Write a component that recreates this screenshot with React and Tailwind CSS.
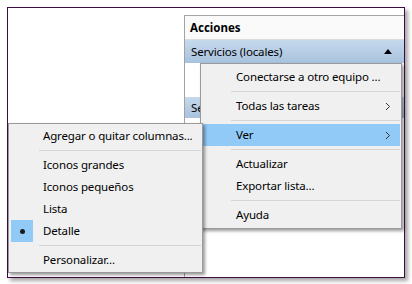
import React from 'react';

// --- menu building blocks ---

const font = { fontFamily: '"Noto Sans", "Segoe UI", Arial, sans-serif' };

const Chevron = () => (
    <svg width="6" height="9" viewBox="0 0 6 9" className="shrink-0">
        <path d="M1 1 L4.5 4.5 L1 8" fill="none" stroke="#333" strokeWidth="1" />
    </svg>
);

const Separator = ({ inset }) => (
    <div className={`h-[7px] flex items-center ${inset}`}>
        <div className="h-px w-full bg-[#d4d4d4]" />
    </div>
);

const MainItem = ({ label, sub, active }) => (
    <div className={`h-[22px] mx-px flex items-center pl-[34px] pr-[9px] ${active ? 'bg-[#91c9f7]' : ''}`}>
        <span className="flex-1 whitespace-nowrap text-[11.5px] tracking-[-0.15px] text-black leading-none">{label}</span>
        {sub && <Chevron />}
    </div>
);

const SubItem = ({ label, checked }) => (
    <div className="h-[22px] flex items-center">
        <div className={`w-[22px] h-[22px] ml-[2px] flex items-center justify-center ${checked ? 'bg-[#91c9f7]' : ''}`}>
            {checked && <div className="w-[5px] h-[5px] rounded-full bg-[#1a1a1a]" />}
        </div>
        <span className="pl-[10px] whitespace-nowrap text-[11.5px] tracking-[-0.15px] text-black leading-none">{label}</span>
    </div>
);

export default function App() {
    return (
        <div className="w-[412px] h-[284px] bg-white pl-[7px] pt-[7px]" style={font}>
            {/* window frame */}
            <div className="relative w-[398px] h-[271px] border border-[#3e0c40] bg-white flex shadow-[3px_3px_4px_rgba(0,0,0,0.35)]">
                {/* empty left pane */}
                <div className="w-[176px] bg-white" />

                {/* actions pane */}
                <div className="flex-1 flex flex-col pt-[7px]">
                    <div className="flex-1 flex flex-col border-t border-l border-[#a3a3a3]">
                        <div className="h-[24px] flex items-center pl-[5px] bg-[#fafafa] border-b border-[#dcdcdc]">
                            <span className="text-[11.5px] font-bold text-black whitespace-nowrap">Acciones</span>
                        </div>
                        <div className="h-[23px] flex items-center pl-[6px] pr-[12px] bg-gradient-to-b from-[#c6d9ed] to-[#a8c2de]">
                            <span className="flex-1 text-[11.5px] tracking-[-0.15px] text-black whitespace-nowrap">Servicios (locales)</span>
                            <svg width="8" height="5" viewBox="0 0 8 5">
                                <path d="M0 5 L4 0 L8 5 Z" fill="#000" />
                            </svg>
                        </div>
                        <div className="h-[34px] bg-white" />
                        <div className="h-[21px] flex items-center pl-[6px] bg-gradient-to-b from-[#c6d9ed] to-[#a8c2de]">
                            <span className="text-[11.5px] text-black whitespace-nowrap">Servicios</span>
                        </div>
                    </div>
                </div>

                {/* context menu */}
                <div className="absolute left-[192px] top-[55px] w-[202px] bg-[#f0f0f0] border border-[#9a9a9a] py-[2px] shadow-[2px_2px_3px_rgba(0,0,0,0.4)]">
                    <MainItem label="Conectarse a otro equipo ..." />
                    <Separator inset="ml-[30px] mr-[1px]" />
                    <MainItem label="Todas las tareas" sub />
                    <Separator inset="ml-[30px] mr-[1px]" />
                    <MainItem label="Ver" sub active />
                    <Separator inset="ml-[30px] mr-[1px]" />
                    <MainItem label="Actualizar" />
                    <MainItem label="Exportar lista..." />
                    <Separator inset="ml-[30px] mr-[1px]" />
                    <MainItem label="Ayuda" />
                </div>

                {/* "Ver" submenu */}
                <div className="absolute left-0 top-[115px] w-[195px] bg-[#f0f0f0] border border-[#9a9a9a] py-px shadow-[2px_2px_3px_rgba(0,0,0,0.4)]">
                    <SubItem label="Agregar o quitar columnas..." />
                    <Separator inset="ml-[30px] mr-[1px]" />
                    <SubItem label="Iconos grandes" />
                    <SubItem label="Iconos pequeños" />
                    <SubItem label="Lista" />
                    <SubItem label="Detalle" checked />
                    <Separator inset="ml-[30px] mr-[1px]" />
                    <SubItem label="Personalizar..." />
                </div>
            </div>
        </div>
    );
}
